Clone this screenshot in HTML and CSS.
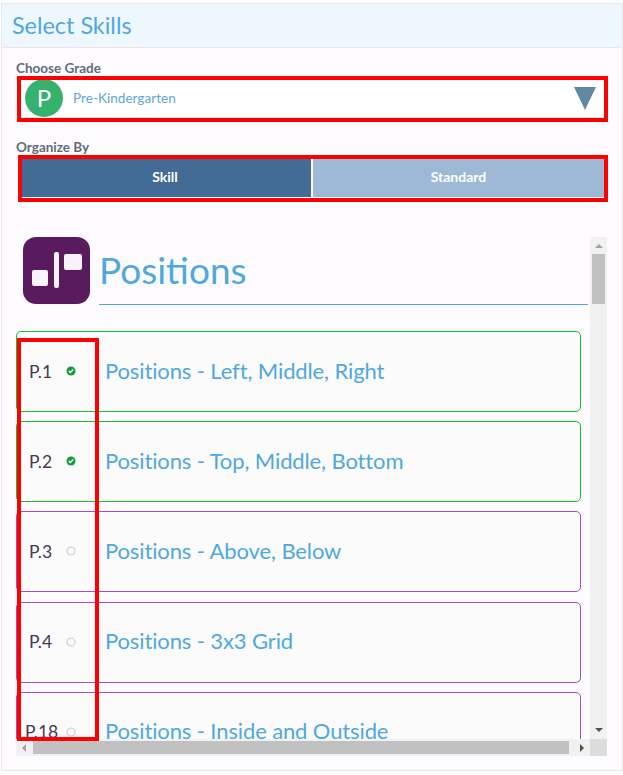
FILE: index.html
```html
<!DOCTYPE html>
<html lang="en">
<head>
  <meta charset="UTF-8">
  <title>Select Skills</title>
  <meta name="viewport" content="width=device-width, initial-scale=1.0">
  <link rel="stylesheet" href="styles.css">
</head>
<body>

  <div class="panel">
    <div class="panel-head">Select Skills</div>

    <div class="panel-body">
      <div class="field-label">Choose Grade</div>
      <div class="grade-select">
        <span class="grade-badge">P</span>
        <span class="grade-name">Pre-Kindergarten</span>
        <span class="grade-arrow"></span>
      </div>

      <div class="field-label organize-label">Organize By</div>
      <div class="organize-tabs">
        <div class="tab tab-active">Skill</div>
        <div class="tab">Standard</div>
      </div>

      <div class="skills-box">
        <div class="skills-view">
          <div class="topic">
            <svg class="topic-icon" viewBox="0 0 67 67">
              <rect width="67" height="67" rx="13" fill="#5a1a5e"/>
              <rect x="9" y="33" width="16" height="16" rx="2" fill="#f7f3f8"/>
              <rect x="31" y="15" width="5" height="36" rx="2" fill="#f7f3f8"/>
              <rect x="41" y="17" width="18" height="16" rx="2" fill="#f7f3f8"/>
            </svg>
            <div class="topic-title">Positions</div>
          </div>

          <div class="skill skill-done">
            <div class="skill-code">P.1</div>
            <svg class="skill-status" viewBox="0 0 10 10">
              <circle cx="5" cy="5" r="4.5" fill="#0e9f3c"/>
              <path d="M2.8 5.1 4.4 6.6 7.2 3.6" fill="none" stroke="#fff" stroke-width="1.4"/>
            </svg>
            <div class="skill-name">Positions - Left, Middle, Right</div>
          </div>
          <div class="skill skill-done">
            <div class="skill-code">P.2</div>
            <svg class="skill-status" viewBox="0 0 10 10">
              <circle cx="5" cy="5" r="4.5" fill="#0e9f3c"/>
              <path d="M2.8 5.1 4.4 6.6 7.2 3.6" fill="none" stroke="#fff" stroke-width="1.4"/>
            </svg>
            <div class="skill-name">Positions - Top, Middle, Bottom</div>
          </div>
          <div class="skill">
            <div class="skill-code">P.3</div>
            <svg class="skill-status" viewBox="0 0 10 10">
              <circle cx="5" cy="5" r="4" fill="none" stroke="#cfcfcf" stroke-width="1.2"/>
            </svg>
            <div class="skill-name">Positions - Above, Below</div>
          </div>
          <div class="skill">
            <div class="skill-code">P.4</div>
            <svg class="skill-status" viewBox="0 0 10 10">
              <circle cx="5" cy="5" r="4" fill="none" stroke="#cfcfcf" stroke-width="1.2"/>
            </svg>
            <div class="skill-name">Positions - 3x3 Grid</div>
          </div>
          <div class="skill">
            <div class="skill-code code-long">P.18</div>
            <svg class="skill-status" viewBox="0 0 10 10">
              <circle cx="5" cy="5" r="4" fill="none" stroke="#cfcfcf" stroke-width="1.2"/>
            </svg>
            <div class="skill-name">Positions - Inside and Outside</div>
          </div>
        </div>

        <div class="vbar">
          <span class="arrow arrow-up"></span>
          <div class="vbar-track"><div class="vbar-thumb"></div></div>
          <span class="arrow arrow-down"></span>
        </div>
        <div class="hbar">
          <span class="arrow arrow-left"></span>
          <div class="hbar-track"><div class="hbar-thumb"></div></div>
          <span class="arrow arrow-right"></span>
        </div>
        <div class="corner"></div>
      </div>
    </div>

    <!-- red annotation boxes drawn over the page -->
    <div class="mark mark-grade"></div>
    <div class="mark mark-tabs"></div>
    <div class="mark mark-codes"></div>
  </div>

</body>
</html>
```

FILE: styles.css
```css
body {
  margin: 0;
  font-family: 'Lato', 'Noto Sans', sans-serif;
  background-color: #fff;
}

.panel {
  position: relative;
  box-sizing: border-box;
  width: 622px;
  height: 768px;
  margin: 3px 0 0 1px;
  border: 1px solid #e8e8ec;
  background-color: #fdfbff;
}

.panel-head {
  box-sizing: border-box;
  height: 44px;
  padding: 6px 0 0 10px;
  background-color: #eef7fe;
  border-bottom: 1px solid #e8e8ec;
  color: #4fa8e0;
  font-size: 23.4px;
  line-height: 30px;
}

.panel-body {
  padding: 12px 14px 0 14px;
}

.field-label {
  color: #5f6b7c;
  font-size: 13.5px;
  font-weight: 700;
  line-height: 16px;
}

.organize-label {
  margin-top: 21px;
}

.grade-select {
  display: flex;
  align-items: center;
  box-sizing: border-box;
  width: 590px;
  height: 39px;
  margin-top: 3px;
  padding: 0 10px 0 9px;
  background-color: #fff;
  border-bottom: 1px solid #e4e0ea;
}

.grade-badge {
  flex: none;
  width: 38px;
  height: 38px;
  border-radius: 50%;
  background-color: #35b36e;
  color: #fff;
  font-size: 24px;
  line-height: 38px;
  text-align: center;
}

.grade-name {
  flex: 1;
  margin-left: 10px;
  color: #5fa6dc;
  font-size: 13.6px;
}

.grade-arrow {
  width: 0;
  height: 0;
  border-left: 11.5px solid transparent;
  border-right: 11.5px solid transparent;
  border-top: 23px solid #6189a6;
}

.organize-tabs {
  display: flex;
  gap: 2px;
  width: 582px;
  margin: 3px 0 0 6px;
}

.tab {
  flex: 1;
  height: 39px;
  background-color: #9db9d5;
  color: #fff;
  font-size: 14px;
  font-weight: 700;
  line-height: 37px;
  text-align: center;
}

.tab-active {
  flex: 0 0 289px;
  box-sizing: border-box;
  padding-right: 3px;
  background-color: #426b95;
}

.skills-box {
  display: grid;
  grid-template-columns: 574px 17px;
  grid-template-rows: 502px 17px;
  margin-top: 40px;
}

.skills-view {
  overflow: hidden;
}

.topic {
  display: flex;
  align-items: flex-start;
  height: 94px;
  padding: 0 2px 0 7px;
}

.topic-icon {
  flex: none;
  width: 67px;
  height: 67px;
}

.topic-title {
  flex: 1;
  box-sizing: border-box;
  height: 68px;
  margin-left: 9px;
  border-bottom: 1px solid #4fa8e0;
  color: #4fa8e0;
  font-size: 37px;
  line-height: 66px;
}

.skill {
  display: flex;
  align-items: center;
  box-sizing: border-box;
  width: 565px;
  height: 81px;
  margin-bottom: 9.2px;
  padding-bottom: 1px;
  border: 1px solid #a94cc0;
  border-radius: 5px;
  background-color: #fbfbfb;
}

.skill-done {
  border-color: #12c41e;
}

.skill-code {
  width: 49px;
  padding-left: 12px;
  box-sizing: border-box;
  color: #4a3553;
  font-size: 17.5px;
}

.code-long {
  margin-left: -4px;
  width: 53px;
}

.skill-status {
  flex: none;
  width: 10px;
  height: 10px;
}

.skill-name {
  margin: 0 0 2px 29px;
  color: #4fa8e0;
  font-size: 22px;
  letter-spacing: -0.12px;
}

.vbar {
  display: flex;
  flex-direction: column;
  align-items: center;
  background-color: #f1f1f1;
}

.vbar-track {
  flex: 1;
  width: 13px;
}

.vbar-thumb {
  width: 13px;
  height: 50px;
  background-color: #c1c1c1;
}

.hbar {
  display: flex;
  align-items: center;
  background-color: #f1f1f1;
}

.hbar-track {
  flex: 1;
  height: 13px;
}

.hbar-thumb {
  width: 536px;
  height: 13px;
  background-color: #c1c1c1;
}

.corner {
  background-color: #dcdcdc;
}

.arrow {
  flex: none;
  width: 0;
  height: 0;
  border: 4px solid transparent;
}

.arrow-up {
  margin: 7px 0 6px;
  border-top-width: 0;
  border-bottom-color: #a3a3a3;
}

.arrow-down {
  margin: 8px 0 7px;
  border-bottom-width: 0;
  border-top-color: #505050;
}

.arrow-left {
  margin: 0 7px 0 6px;
  border-left-width: 0;
  border-right-color: #a3a3a3;
}

.arrow-right {
  margin: 0 6px 0 11px;
  border-right-width: 0;
  border-left-color: #505050;
}

.mark {
  position: absolute;
  box-sizing: border-box;
  border: 4px solid #f00;
}

.mark-grade {
  left: 15px;
  top: 72px;
  width: 591px;
  height: 46px;
}

.mark-tabs {
  left: 16px;
  top: 151px;
  width: 590px;
  height: 47px;
}

.mark-codes {
  left: 15px;
  top: 334px;
  width: 82px;
  height: 403px;
}
```
